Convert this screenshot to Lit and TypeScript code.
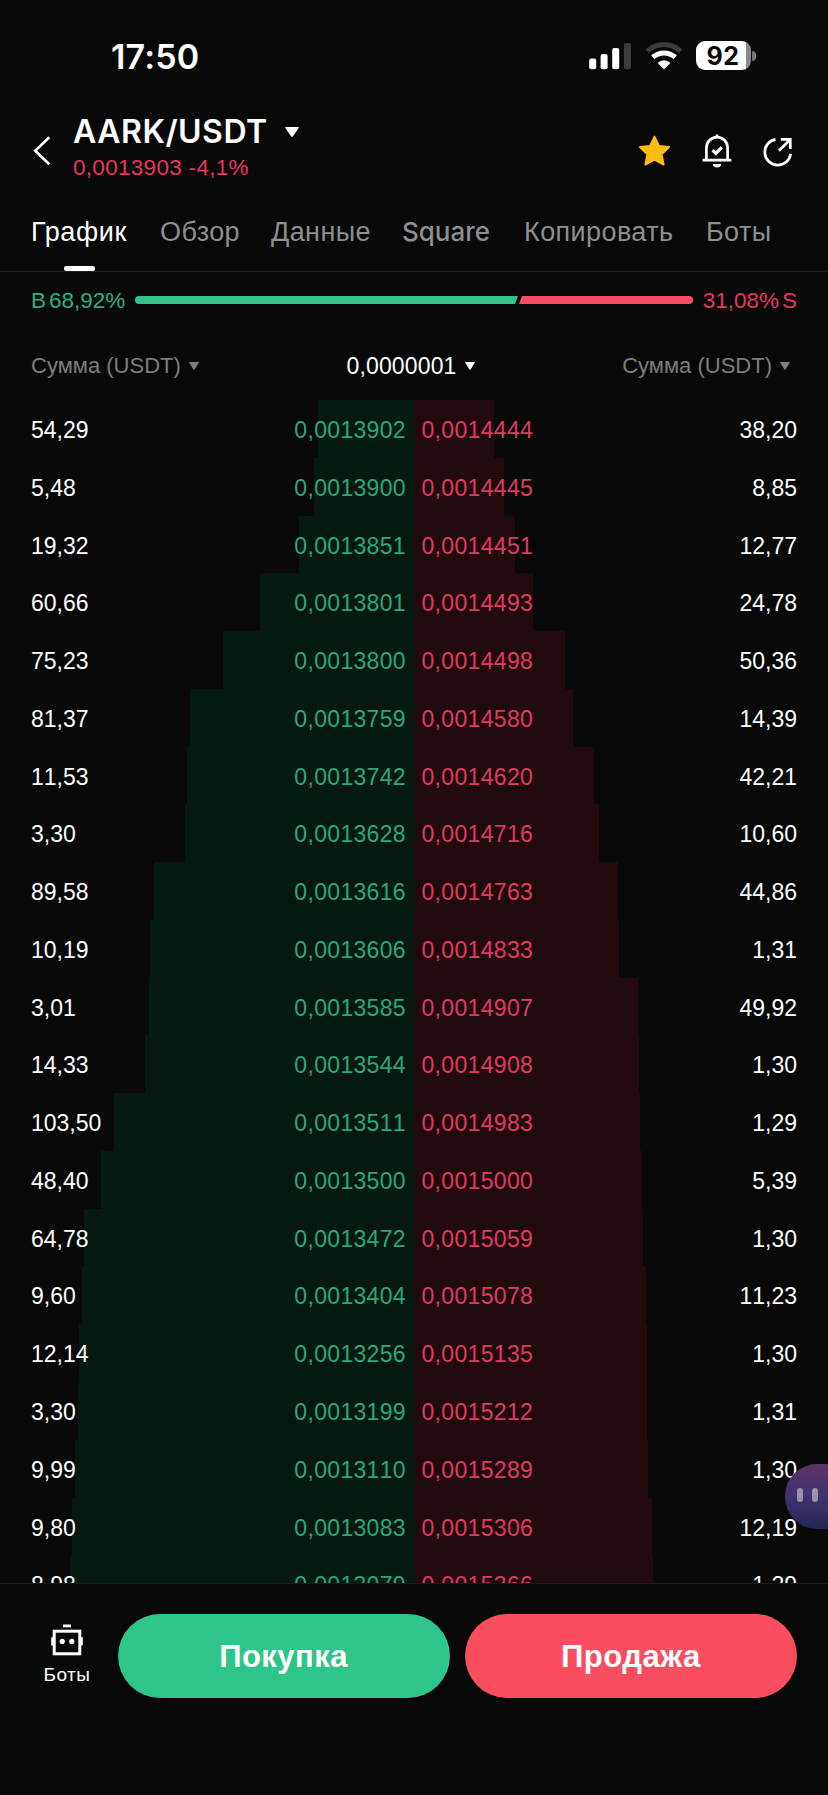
import { LitElement, html, css } from "lit";
import { customElement, property } from "lit/decorators.js";

interface Level {
  amount: string;
  price: string;
  depth: number;
}

const level = (amount: string, price: string, depth: number): Level => ({ amount, price, depth });

const BIDS: Level[] = [
  level("54,29", "0,0013902", 96),
  level("5,48", "0,0013900", 100),
  level("19,32", "0,0013851", 115.5),
  level("60,66", "0,0013801", 154),
  level("75,23", "0,0013800", 191),
  level("81,37", "0,0013759", 224),
  level("11,53", "0,0013742", 227.5),
  level("3,30", "0,0013628", 229.5),
  level("89,58", "0,0013616", 260),
  level("10,19", "0,0013606", 264),
  level("3,01", "0,0013585", 265),
  level("14,33", "0,0013544", 269),
  level("103,50", "0,0013511", 300),
  level("48,40", "0,0013500", 313),
  level("64,78", "0,0013472", 330),
  level("9,60", "0,0013404", 332),
  level("12,14", "0,0013256", 335.5),
  level("3,30", "0,0013199", 336.5),
  level("9,99", "0,0013110", 339),
  level("9,80", "0,0013083", 342),
  level("8,98", "0,0013079", 344),
];

const ASKS: Level[] = [
  level("38,20", "0,0014444", 80),
  level("8,85", "0,0014445", 89.5),
  level("12,77", "0,0014451", 101),
  level("24,78", "0,0014493", 119),
  level("50,36", "0,0014498", 151),
  level("14,39", "0,0014580", 159),
  level("42,21", "0,0014620", 180),
  level("10,60", "0,0014716", 185),
  level("44,86", "0,0014763", 204),
  level("1,31", "0,0014833", 205),
  level("49,92", "0,0014907", 224),
  level("1,30", "0,0014908", 225),
  level("1,29", "0,0014983", 226),
  level("5,39", "0,0015000", 228),
  level("1,30", "0,0015059", 229),
  level("11,23", "0,0015078", 232),
  level("1,30", "0,0015135", 232.5),
  level("1,31", "0,0015212", 233),
  level("1,30", "0,0015289", 234),
  level("12,19", "0,0015306", 238),
  level("1,29", "0,0015366", 238.5),
];

const caret = (w: number, h: number) => html`
  <svg width=${w} height=${h} viewBox="0 0 10 8" preserveAspectRatio="none">
    <path d="M.7 0h8.6q1 0 .5.8L5.7 7.3q-.7 1-1.4 0L.2.8Q-.3 0 .7 0z" fill="currentColor" />
  </svg>
`;

@customElement("status-bar")
export class StatusBar extends LitElement {
  static styles = css`
    :host {
      display: flex;
      justify-content: space-between;
      height: 112px;
      padding: 0 72px 0 111px;
      box-sizing: border-box;
    }
    .time {
      font: 600 34px/40px Inter, sans-serif;
      letter-spacing: 0.2px;
      margin-top: 37px;
    }
    .icons {
      display: flex;
      align-items: flex-start;
      margin-top: 41px;
    }
    .wifi {
      margin-left: 13px;
    }
    .battery {
      display: flex;
      align-items: center;
      margin-left: 13px;
    }
    .level {
      width: 55px;
      height: 29px;
      box-sizing: border-box;
      border-radius: 9px;
      background: linear-gradient(90deg, #fff 50px, #8a8a8a 50px);
      color: #080808;
      font: 700 25px/30px Inter, sans-serif;
      letter-spacing: 0.4px;
      padding-left: 11px;
    }
    .nub {
      width: 4px;
      height: 10px;
      margin-left: 1.5px;
      border-radius: 0 5px 5px 0;
      background: #777;
    }
  `;

  render() {
    return html`
      <div class="time">17:50</div>
      <div class="icons">
        <svg width="43" height="29" viewBox="0 0 43 29" fill="#fff">
          <rect x=".2" y="17.6" width="7" height="10.6" rx="2" />
          <rect x="11.6" y="13" width="7" height="15.2" rx="2" />
          <rect x="23.2" y="7" width="7" height="21.2" rx="2" />
          <rect x="35" y="2" width="7" height="26.2" rx="2" fill="#3c3c3c" />
        </svg>
        <svg class="wifi" width="38" height="29" viewBox="0 0 38 29" fill="none" stroke-width="5">
          <path d="M2.2 10.2Q10 3.5 19 3.5t16.8 6.7" stroke="#3c3c3c" />
          <path d="M7.8 16.3Q13 12 19 12t11.2 4.300" stroke="#fff" />
          <path d="M12.6 22Q15.500 19.300 19 19.300t6.400 2.700L19 28.500z" fill="#fff" />
        </svg>
        <div class="battery">
          <div class="level">92</div>
          <div class="nub"></div>
        </div>
      </div>
    `;
  }
}

@customElement("pair-header")
export class PairHeader extends LitElement {
  static styles = css`
    :host {
      display: flex;
      height: 96px;
      padding: 0 34px 0 33px;
      box-sizing: border-box;
    }
    .back {
      margin-top: 24px;
      width: 40px;
    }
    .pair {
      display: flex;
      align-items: center;
      gap: 17px;
      height: 40px;
      font: 600 32px/42px Inter, sans-serif;
      letter-spacing: 0.5px;
    }
    .change {
      margin-top: 3px;
      font-size: 22.5px;
      line-height: 26px;
      letter-spacing: 0.3px;
      color: #e8365f;
    }
    .tools {
      display: flex;
      gap: 27.5px;
      margin: 21px -1px 0 auto;
    }
  `;

  render() {
    return html`
      <svg class="back" width="40" height="32" viewBox="0 0 40 32" fill="none">
        <path d="M16.300 1.300 2.200 14.800l14.100 13.500" stroke="#fff" stroke-width="2.600" />
      </svg>
      <div>
        <div class="pair"><span>AARK/USDT</span>${caret(14, 10)}</div>
        <div class="change">0,0013903 -4,1%</div>
      </div>
      <div class="tools">
        <svg width="36" height="36" viewBox="0 0 36 36">
          <path
            d="M18.500 3.600l4.400 9.300 10.200 1.200-7.500 7.100 2 10.300-9.100-5-9.100 5 2-10.300-7.500-7.100 10.200-1.200z"
            fill="#ffbb0e"
            stroke="#ffbb0e"
            stroke-width="2"
            stroke-linejoin="round"
          />
        </svg>
        <svg width="34" height="36" viewBox="0 0 34 36" fill="none" stroke="#fff" stroke-width="2.700">
          <path d="M6.400 27V14.800a10.600 10.600 0 0 1 21.200 0V27M2.600 27.200h28.800M17 1.600v3" />
          <path d="M12.600 17.200l3.200 3.200 6-6.100" stroke-width="3.200" />
          <path d="M12.800 31h8.400a4.200 3.400 0 0 1-8.400 0z" fill="#fff" stroke="none" />
        </svg>
        <svg width="34" height="36" viewBox="0 0 34 36" fill="none" stroke="#fff" stroke-width="2.700">
          <path d="M14.500 6.300A13 13 0 1 0 29.700 20.800" />
          <path d="M19.800 6.400h9.500v9.500M28.800 6.900 18 17.700" />
        </svg>
      </div>
    `;
  }
}

@customElement("section-tabs")
export class SectionTabs extends LitElement {
  static styles = css`
    :host {
      display: grid;
      grid-template-columns: 129px 111px 131px 122px 182px auto;
      height: 64px;
      padding-left: 31px;
      box-sizing: border-box;
      border-bottom: 1px solid #242424;
      font-size: 27px;
      letter-spacing: 0.4px;
      line-height: 48px;
      color: #8d8f90;
      white-space: nowrap;
    }
    .active {
      color: #fff;
      display: flex;
      flex-direction: column;
      letter-spacing: 0.6px;
    }
    .active::after {
      content: "";
      width: 31px;
      height: 5px;
      margin: 10px 0 0 33px;
      border-radius: 2px;
      background: #fff;
    }
    .latin {
      font: 500 26px/48px Inter, sans-serif;
      letter-spacing: 0;
    }
  `;

  render() {
    return html`
      <span class="active">График</span>
      <span>Обзор</span>
      <span>Данные</span>
      <span class="latin">Square</span>
      <span>Копировать</span>
      <span>Боты</span>
    `;
  }
}

@customElement("buy-sell-ratio")
export class BuySellRatio extends LitElement {
  static styles = css`
    :host {
      display: flex;
      align-items: center;
      height: 57px;
      padding: 0 31px;
      font-size: 22.5px;
      line-height: 58px;
      white-space: nowrap;
    }
    .buy,
    .sell {
      display: flex;
      gap: 3px;
      width: 104px;
    }
    .buy {
      color: #25b47e;
    }
    .sell {
      justify-content: flex-end;
      color: #e8365f;
    }
    svg {
      flex: 1;
      height: 8px;
      margin-bottom: 1px;
    }
  `;

  render() {
    return html`
      <div class="buy"><span>B</span><span>68,92%</span></div>
      <svg viewBox="0 0 558 8" preserveAspectRatio="none">
        <path d="M4 0h379l-3 8H4a4 4 0 0 1 0-8z" fill="#33c08a" />
        <path d="M387 0h167a4 4 0 0 1 0 8H384z" fill="#f94e61" />
      </svg>
      <div class="sell"><span>31,08%</span><span>S</span></div>
    `;
  }
}

@customElement("book-side")
export class BookSide extends LitElement {
  @property({ attribute: false }) levels: Level[] = [];
  @property({ reflect: true }) side = "bid";

  static styles = css`
    :host {
      display: block;
      --bar: #051911;
      --price: #25a976;
    }
    :host([side="ask"]) {
      --bar: #200a0e;
      --price: #e03a60;
    }
    .row {
      display: grid;
      height: 57.77px;
    }
    .bar,
    .text {
      grid-area: 1 / 1;
    }
    .bar {
      justify-self: end;
      background: var(--bar);
      height: 58px;
    }
    .text {
      display: flex;
      justify-content: space-between;
      padding: 0 8px 0 31px;
      font-size: 23px;
      line-height: 60px;
      font-kerning: none;
    }
    .price {
      color: var(--price);
      letter-spacing: 0.33px;
    }
    :host([side="ask"]) .bar {
      justify-self: start;
    }
    :host([side="ask"]) .text {
      flex-direction: row-reverse;
      padding: 0 31px 0 7.5px;
    }
  `;

  render() {
    return html`${this.levels.map(
      (l) => html`
        <div class="row">
          <div class="bar" style="width:${l.depth}px"></div>
          <div class="text"><span>${l.amount}</span><span class="price">${l.price}</span></div>
        </div>
      `
    )}`;
  }
}

@customElement("trade-footer")
export class TradeFooter extends LitElement {
  static styles = css`
    :host {
      display: flex;
      align-items: flex-start;
      height: 212px;
      padding: 30px 31px 0 33px;
      box-sizing: border-box;
      border-top: 1px solid #1c1c1c;
      background: #080808;
    }
    .bots {
      display: flex;
      flex-direction: column;
      align-items: center;
      width: 68px;
      margin: 10px 16.5px 0 0;
      font-size: 19px;
      letter-spacing: 0.5px;
      line-height: 24px;
    }
    .bots svg {
      margin-bottom: 7px;
    }
    .action {
      flex: 1;
      height: 84px;
      border-radius: 42px;
      text-align: center;
      font-size: 31px;
      font-weight: 700;
      line-height: 85px;
      letter-spacing: 0.5px;
    }
    .buy {
      background: #2dc589;
      margin-right: 15px;
    }
    .sell {
      background: #fa4d60;
    }
  `;

  render() {
    return html`
      <div class="bots">
        <svg width="34" height="32" viewBox="0 0 34 32" fill="none" stroke="#fff">
          <path d="M13 1.900h8" stroke-width="2.800" />
          <rect x="4.200" y="7.200" width="25.600" height="22.600" stroke-width="3" />
          <path d="M2.500 13.200v8.200M31.500 13.200v8.200" stroke-width="2.600" />
          <circle cx="12.200" cy="17.400" r="2.600" fill="#fff" stroke="none" />
          <circle cx="21.800" cy="17.400" r="2.600" fill="#fff" stroke="none" />
        </svg>
        <span>Боты</span>
      </div>
      <div class="action buy">Покупка</div>
      <div class="action sell">Продажа</div>
    `;
  }
}

@customElement("app-root")
export class AppRoot extends LitElement {
  static styles = css`
    :host {
      display: flex;
      flex-direction: column;
      position: relative;
      height: 1795px;
      overflow: hidden;
      background: #080808;
      color: #fff;
      font-family: "Liberation Sans", Arial, sans-serif;
    }
    .columns {
      display: grid;
      grid-template-columns: 1fr auto 1fr;
      align-items: center;
      height: 71px;
      padding: 3px 38px 0 31px;
      box-sizing: border-box;
      font-size: 22px;
      color: #7c7d7e;
    }
    .columns div {
      display: flex;
      align-items: center;
      gap: 8px;
    }
    .columns .tick {
      font-size: 23px;
      letter-spacing: 0.15px;
      color: #fff;
    }
    .columns .end {
      justify-content: flex-end;
    }
    .book {
      flex: 1;
      min-height: 0;
      overflow: hidden;
      display: grid;
      grid-template-columns: 1fr 1fr;
      align-items: start;
    }
    .helper {
      position: absolute;
      right: -28px;
      top: 1464px;
      width: 71px;
      height: 65px;
      border-radius: 32px;
      display: flex;
      gap: 9px;
      box-sizing: border-box;
      padding: 24px 0 0 12px;
      background: linear-gradient(#5e3567, #40316f 50%, #262558);
    }
    .eye {
      width: 6px;
      height: 14px;
      border-radius: 3px;
      background: #9d91a9;
    }
  `;

  render() {
    return html`
      <status-bar></status-bar>
      <pair-header></pair-header>
      <section-tabs></section-tabs>
      <buy-sell-ratio></buy-sell-ratio>
      <div class="columns">
        <div><span>Сумма (USDT)</span>${caret(10, 8)}</div>
        <div class="tick"><span>0,0000001</span>${caret(10, 8)}</div>
        <div class="end"><span>Сумма (USDT)</span>${caret(10, 8)}</div>
      </div>
      <div class="book">
        <book-side side="bid" .levels=${BIDS}></book-side>
        <book-side side="ask" .levels=${ASKS}></book-side>
      </div>
      <trade-footer></trade-footer>
      <div class="helper"><div class="eye"></div><div class="eye"></div></div>
    `;
  }
}
